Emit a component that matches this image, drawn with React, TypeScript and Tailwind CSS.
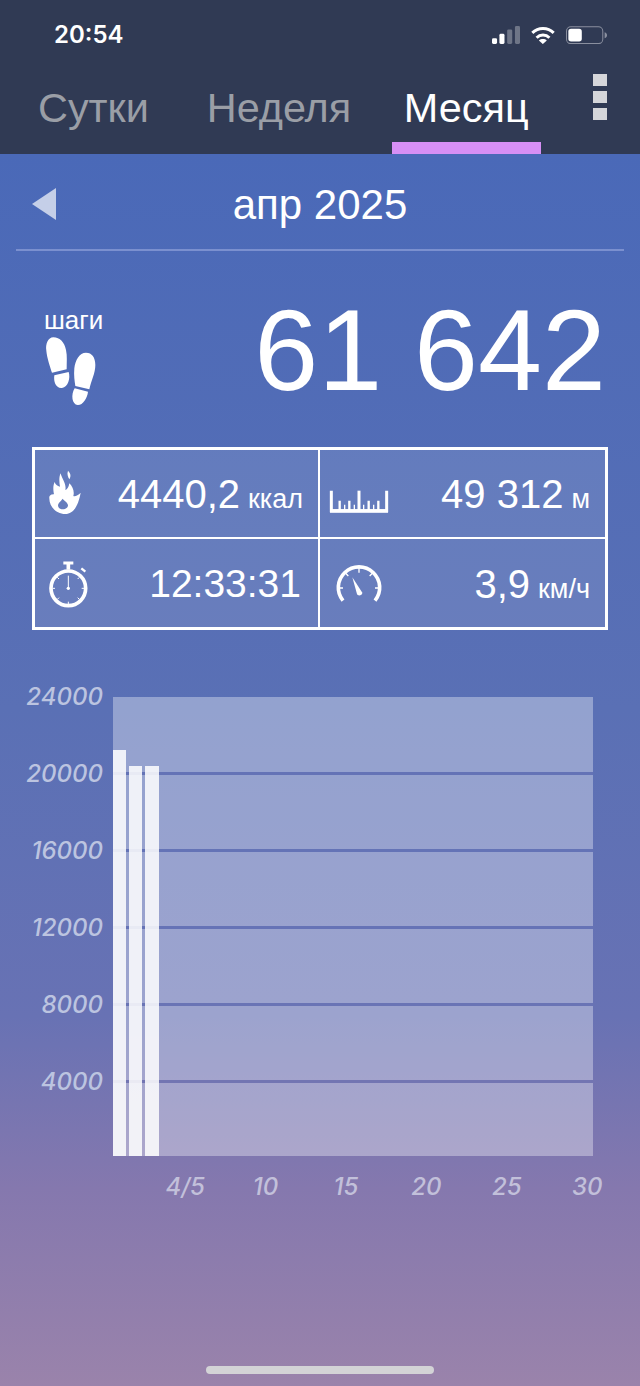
import React from 'react';

const yLabels = ['24000', '20000', '16000', '12000', '8000', '4000'];
const xLabels = ['4/5', '10', '15', '20', '25', '30'];

// grid line colour follows the page gradient
const rows = [
  'h-[78px] border-b-[3px] border-[#6473b6]',
  'h-[77px] border-b-[3px] border-[#6473b6]',
  'h-[77px] border-b-[3px] border-[#6673b6]',
  'h-[77px] border-b-[3px] border-[#6a74b5]',
  'h-[77px] border-b-[3px] border-[#7275b2]',
  'h-[73px]',
];

const Footprints = () => (
  <svg width="70" height="80" viewBox="0 0 210 240" fill="white">
    <path d="M52 22C36 22 28 42 31 62C33 84 42 110 48 128L92 118C92 96 94 78 90 60C86 38 72 22 52 22Z" />
    <path d="M55 136L98 126C104 144 96 172 78 174C60 176 52 156 55 136Z" />
    <path d="M150 68C130 68 118 90 115 115C113 135 116 155 118 168L160 178C166 150 178 130 178 105C178 82 168 68 150 68Z" />
    <path d="M116 175L156 185C154 205 140 226 125 225C108 224 104 195 116 175Z" />
  </svg>
);

const Flame = () => (
  <svg width="60" height="60" viewBox="0 0 180 180" fill="white" className="shrink-0">
    <path d="M84 20C94 30 92 38 88 46C84 38 80 30 84 20Z" />
    <path
      fillRule="evenodd"
      d="M62 28C56 40 58 56 60 68C52 66 46 62 44 54C38 66 40 82 42 90C38 92 32 90 28 98C26 125 46 150 76 150C104 150 116 118 122 86C114 94 106 98 100 96C104 82 98 68 88 58C86 70 82 76 76 78C80 60 66 46 62 28ZM68 104C60 114 54 118 54 124C54 132 60 136 68 136C78 136 84 130 84 124C84 116 74 112 68 104Z"
    />
  </svg>
);

const Stopwatch = () => (
  <svg width="60" height="60" viewBox="0 0 180 180" fill="none" stroke="white" className="shrink-0 mt-[2px]">
    <path d="M70 24H100" strokeWidth="9" />
    <path d="M85 26V44" strokeWidth="11" />
    <path d="M124 40L136 50" strokeWidth="7" />
    <circle cx="85" cy="100" r="52" strokeWidth="11" />
    <path d="M85 62V100" strokeWidth="3" />
    <circle cx="85" cy="100" r="5" fill="white" stroke="none" />
    <path d="M85 140V147M45 100H38M125 100H132M57 128L52 133M113 128L118 133M57 72L52 67M113 72L118 67" strokeWidth="3" />
  </svg>
);

const Ruler = () => (
  <svg width="70" height="50" viewBox="0 0 210 150" fill="none" stroke="white" className="shrink-0">
    <path d="M22 32V92H188V32" strokeWidth="9" />
    <path d="M18 93H192" strokeWidth="11" />
    <path d="M105 32V90" strokeWidth="9" />
    <path d="M47 62V90M76 62V90M134 62V90M163 62V90" strokeWidth="7" />
    <path d="M62 74V90M91 74V90M119 74V90M149 74V90" strokeWidth="4" />
  </svg>
);

const Gauge = () => (
  <svg width="60" height="50" viewBox="0 0 180 150" fill="none" stroke="white" className="shrink-0 mb-[2px]">
    <path d="M42 128A62 62 0 1 1 138 128" strokeWidth="11" />
    <path d="M90 30V44M50 46L58 54M130 46L122 54M28 90H42M152 90H138" strokeWidth="4" />
    <path d="M70 58L84 108C87 116 100 112 100 104Z" fill="white" stroke="none" />
  </svg>
);

export default function App() {
  return (
    <div className="w-[640px] h-[1386px] flex flex-col overflow-hidden font-['Liberation_Sans',sans-serif] text-white">
      <header className="h-[154px] bg-[#303a54] flex flex-col shrink-0">
        <div className="flex items-center justify-between h-[70px] pl-[54px] pr-[33px]">
          <span className="font-['Inter',sans-serif] text-[24px] font-semibold">20:54</span>
          <div className="flex items-center gap-[11px]">
            <svg width="28" height="18" viewBox="25 32 83 53" fill="white">
              <rect x="25" y="68" width="15" height="17" rx="4" />
              <rect x="47" y="55" width="15" height="30" rx="4" />
              <rect x="70" y="42" width="15" height="43" rx="4" fillOpacity="0.3" />
              <rect x="93" y="32" width="15" height="53" rx="4" fillOpacity="0.3" />
            </svg>
            <svg width="24" height="18" viewBox="140 32 73 53" fill="none" stroke="white" strokeWidth="9">
              <path d="M144 52C162 34 191 34 209 52" />
              <path d="M157 67C168 56 185 56 196 67" />
              <path d="M176 86L164 75C171 69 182 69 188 75Z" fill="white" stroke="none" />
            </svg>
            <svg width="41" height="18" viewBox="245 32 122 53" fill="none">
              <rect x="246.5" y="34" width="108" height="50" rx="13" stroke="#8a8f9f" strokeWidth="3" />
              <rect x="252" y="40" width="40" height="38" rx="8" fill="white" />
              <path d="M360 50C365 52 367 55 367 59C367 63 365 66 360 68Z" fill="#8a8f9f" />
            </svg>
          </div>
        </div>
        <div className="flex-1 flex items-start relative">
          <span className="ml-[38px] mt-[13px] text-[41.4px] leading-[50px] text-[#9a9ea6]">Сутки</span>
          <span className="ml-[58px] mt-[13px] text-[41.4px] leading-[50px] text-[#9a9ea6]">Неделя</span>
          <div className="ml-[40.6px] w-[149px] h-full flex flex-col items-center justify-between">
            <span className="mt-[13px] text-[41.4px] leading-[50px]">Месяц</span>
            <div className="w-full h-[12px] bg-[#d68ff5]" />
          </div>
          <div className="absolute left-[593px] top-[4px] flex flex-col gap-[5px]">
            <div className="w-[14px] h-[12px] bg-[#d5d6da]" />
            <div className="w-[14px] h-[12px] bg-[#d5d6da]" />
            <div className="w-[14px] h-[12px] bg-[#d5d6da]" />
          </div>
        </div>
      </header>

      <main className="flex-1 flex flex-col bg-[linear-gradient(180deg,#4a69b8_0%,#5a70b5_45%,#6872b4_70%,#8578ae_84%,#9a83ab_100%)]">
        <div className="mx-[16px] h-[97px] border-b-2 border-[#7b90cf] flex items-center justify-center relative">
          <svg className="absolute left-[16px] top-[34px]" width="24" height="32" viewBox="0 0 24 32" fill="#c5cfe8">
            <path d="M24 0V32L0 16Z" />
          </svg>
          <span className="text-[42px] leading-[46px] mt-[6px]">апр 2025</span>
        </div>

        <div className="flex items-start justify-between pl-[44px] pr-[34px] mt-[42px] h-[154px]">
          <div className="flex flex-col mt-[14px]">
            <span className="text-[26px] leading-[26px]">шаги</span>
            <div className="-mt-[3px] -ml-[8px]"><Footprints /></div>
          </div>
          <span className="text-[115px] leading-[114px]">61 642</span>
        </div>

        <div className="mx-[32px] grid grid-cols-2 grid-rows-[89px_88px] border-[3px] border-white bg-white/10 h-[183px]">
          <div className="flex items-center border-r-2 border-b-2 border-white pl-[5px] pr-[15px]">
            <Flame />
            <span className="ml-auto text-[40px]">4440,2<span className="text-[27px] ml-[8px]">ккал</span></span>
          </div>
          <div className="flex items-center border-b-2 border-white pl-[4px] pr-[15px]">
            <div className="mt-[22px]"><Ruler /></div>
            <span className="ml-auto text-[40px]">49 312<span className="text-[27px] ml-[8px]">м</span></span>
          </div>
          <div className="flex items-center border-r-2 border-white pt-[2px] pl-[5px] pr-[17px]">
            <Stopwatch />
            <span className="ml-auto text-[39px]">12:33:31</span>
          </div>
          <div className="flex items-center pt-[2px] pl-[9px] pr-[15px]">
            <Gauge />
            <span className="ml-auto text-[40px]">3,9<span className="text-[27px] ml-[8px]">км/ч</span></span>
          </div>
        </div>

        <div className="flex mt-[67px] font-['Inter',sans-serif] italic font-medium">
          <div className="w-[113px] h-[459px] flex flex-col pr-[10px] text-right text-[24px] leading-[28px] text-[#bcc4e0]">
            {yLabels.map((l) => (
              <div key={l} className="h-[77px] shrink-0">
                <span className="block -translate-y-[14px]">{l}</span>
              </div>
            ))}
          </div>
          <div className="w-[480px] h-[459px] relative bg-white/35">
            <div className="h-full flex flex-col">
              {rows.map((cls) => (
                <div key={cls} className={cls} />
              ))}
            </div>
            <div className="absolute inset-0 flex items-end gap-[3px]">
              <div className="w-[13px] h-[406px] bg-white/85" />
              <div className="w-[13px] h-[390px] bg-white/85" />
              <div className="w-[14px] h-[390px] bg-white/85" />
            </div>
          </div>
        </div>

        <div className="flex pl-[145px] mt-[16px] font-['Inter',sans-serif] italic font-medium text-[24px] leading-[30px] text-[#c2c0da]">
          {xLabels.map((l) => (
            <span key={l} className="w-[80.4px] text-center">{l}</span>
          ))}
        </div>

        <div className="mt-auto mb-[12px] mx-auto w-[228px] h-[8px] rounded-full bg-[#d3d3d6]" />
      </main>
    </div>
  );
}
